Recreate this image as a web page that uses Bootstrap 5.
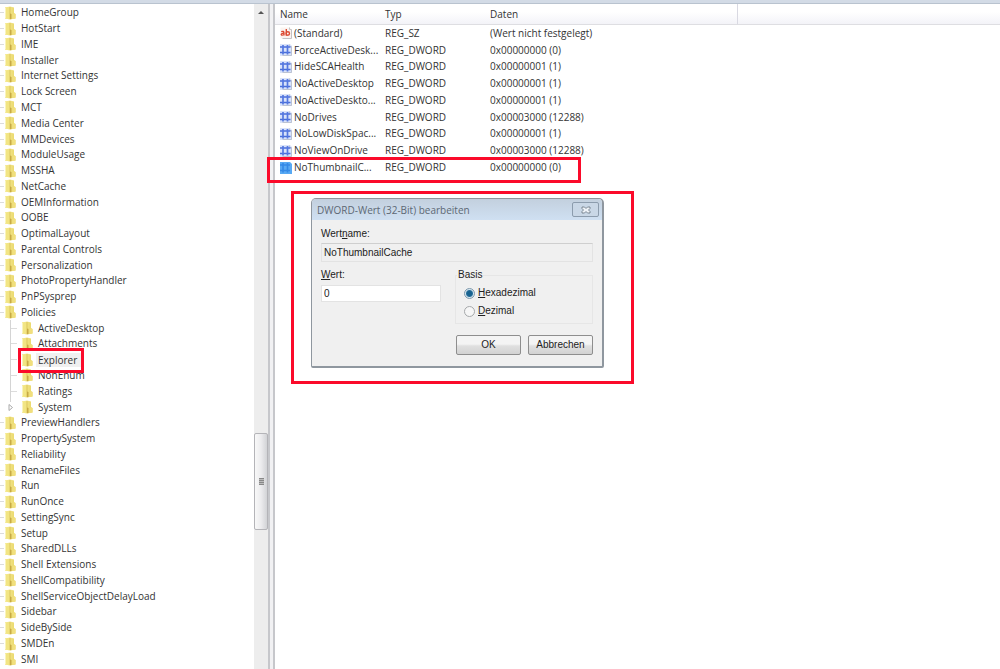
<!DOCTYPE html>
<html lang="de">
<head>
<meta charset="utf-8">
<meta name="viewport" content="width=device-width, initial-scale=1">
<title>Registrierungs-Editor</title>
<link href="https://cdn.jsdelivr.net/npm/bootstrap@5.3.0/dist/css/bootstrap.min.css" rel="stylesheet">
<script src="https://cdn.jsdelivr.net/npm/bootstrap@5.3.0/dist/js/bootstrap.bundle.min.js"></script>
<style>
body { font: 10px/15px "Open Sans", "Noto Sans", sans-serif; color: #333; background: #fff; }
.topline { height: 4px; background: #d3dbe6; border-bottom: 1px solid #b9c3cf; }
.tree-pane { width: 254px; min-height: 0; }
.tree { padding: 1px 0 2px; }
.tree-row { position: relative; flex: 1 1 0; min-height: 15px; gap: 5px; }
.tree-row::before { content: ""; width: 4px; margin-right: -5px; border-top: 1px solid #dcdcdc; }
.tree-row svg { width: 12px; height: 14px; }
.tree-child { padding-left: 10px; }
.tree-child::before { width: 7px; margin-right: -1px; }
.tree-child::after { content: ""; position: absolute; left: 10px; top: 0; bottom: 0; border-left: 1px solid #d4d4d4; }
.tree-last::after { bottom: 80%; }
.tree-last::before { border-color: transparent; }
.expander { position: absolute; left: 8px; top: 5px; width: 6px; height: 7px; padding: 0; border: 0; background: none; }
.expander .expander-mark { display: block; width: 6px; height: 7px; }
.picked { background: #f0f0f0; margin-left: -2px; padding: 0 4px 0 2px; line-height: 14px; }
.marker { position: absolute; border: 3px solid #fb0a2a; pointer-events: none; }
.marker-key { left: 18px; top: -4px; width: 66px; height: 25px; z-index: 2; }
.marker-value { left: -8px; top: -2px; width: 314px; height: 26px; z-index: 2; }
.scroller { width: 14px; background: #ededed; padding-top: 7px; }
.scroll-arrow { width: 0; border: 3px solid transparent; border-top: 0; border-bottom: 3px solid #555; }
.thumb { position: absolute; left: 0; right: 0; top: 64.5%; height: 97px; border: 1px solid #b4b4b8; border-radius: 2px; background: linear-gradient(90deg, #f8f8f8, #ececee 50%, #d2d3d6); }
.grip { width: 5px; height: 7px; background: repeating-linear-gradient(#888 0 1px, #bbb 1px 2px); }
.splitter { width: 7px; border: solid #c6c7cb; border-width: 0 2px; background: #f1f1f3; }
.values { height: 172px; width: 100%; table-layout: fixed; border-collapse: separate; border-spacing: 0; line-height: 15px; }
.values th { height: 21px; font-weight: 400; padding: 1px 0 0 5px; border-bottom: 1px solid #dedee2; background: linear-gradient(#fff 40%, #f3f3f8); }
.values th:last-child { border-left: 1px solid #d9d9e2; }
.values td { position: relative; padding: 0 0 0 5px; white-space: nowrap; }
.values svg { width: 12px; height: 12px; margin-right: 2px; display: block; }
.col-name { width: 105px; } .col-type { width: 105px; } .col-data { width: 252px; }
.stage { left: 16px; top: 187px; width: 343px; height: 193px; border: 3px solid #fb0a2a; padding: 4px 17px; }
.reg-dialog { width: 293px; height: 170px; border: 1px solid #8f979f; border-right-width: 2px; border-bottom-width: 2px; border-radius: 5px 5px 2px 2px; background: #f0f0f0; font-family: "Liberation Sans", Arial, sans-serif; line-height: 12px; color: #222; }
.reg-title { height: 21px; padding: 0 3px 0 5px; border-radius: 4px 4px 0 0; background: linear-gradient(#c3d0de, #cfe0f2); font-family: "Open Sans", sans-serif; color: #5d6874; }
.reg-close { width: 27px; height: 15px; padding: 0; border: 1px solid #8c9cad; border-radius: 2px; background: #c9d7e6; display: flex; align-items: center; justify-content: center; }
.reg-close svg { width: 10px; height: 8px; }
.reg-body { padding: 8px 9px 0; }
.reg-input { display: block; width: 100%; border: 1px solid #e3e3e3; border-radius: 0; font: inherit; color: #222; outline: 0; padding: 0 2px; }
.name-input { height: 19px; border-top-color: #cfcfcf; background: #f0f0f0; margin: 3px 0 7px; }
.value-input { height: 17px; background: #fff; margin-top: 4px; }
.value-col { width: 120px; }
.base { width: 138px; height: 49px; margin-top: 6px; border: 1px solid #e6e6e6; padding: 0 0 0 8px; position: relative; }
.base legend { position: absolute; left: 1px; top: -7px; width: auto; margin: 0; padding: 0 1px; background: #f0f0f0; font-size: 10px; line-height: 12px; float: none; }
.base label { gap: 3px; height: 18px; }
.base input { appearance: none; width: 11px; height: 11px; margin: 0; border: 1px solid #a5a8aa; border-radius: 50%; background: #f6f6f6; }
.base input:checked { border-color: #7d98ac; background: radial-gradient(circle, #17628f 0 2px, #276f9c 3px, #d7e7ef 4px); }
.reg-actions { gap: 7px; margin-top: 11px; }
.reg-btn { width: 65px; height: 20px; padding: 0; border: 1px solid #8e8e8e; border-radius: 2px; background: linear-gradient(#f4f4f4 45%, #e0e0e0 55%, #d2d2d2); color: #222; font-size: 10px; line-height: 12px; }
</style>
</head>
<body class="d-flex flex-column min-vh-100">
<svg class="position-absolute" width="0" height="0" aria-hidden="true">
  <defs>
    <linearGradient id="gold" x1="0" x2="1" y1="0" y2="0"><stop offset="0" stop-color="#f8efa0"/><stop offset="1" stop-color="#e9d667"/></linearGradient>
  </defs>
  <symbol id="folder" viewBox="0 0 12 14"><path d="M1 1.500 6 .500 10 1.500V7l1.500 1v4.500L6 13.500 1 12.500z" fill="url(#gold)"/><path d="M1 1.500 5.500 1v12.300L1 12.500z" fill="#f2e584"/><path d="M1.500 2v10" stroke="#faf4bc"/><path d="M6 1v12" stroke="#dcc55a"/><path d="M6 7.500 7.500 8v5l-1.500.300z" fill="#c8aa45"/><path d="M8.500 7.500 11.500 8v4.500l-3 .600z" fill="#f1df7d"/></symbol>
  <symbol id="dword" viewBox="0 0 12 12"><path d="M0 0h10l2 2v10H0z" fill="#d9e3fa"/><path d="M9.500.5v2h2v9h-9" fill="none" stroke="#bcc3d2"/><path d="M0 3h10.500M0 8.500h10.500" stroke="#4a6edb" stroke-width="1.700"/><path d="M3 1v9.500M7.500 1v9.500" stroke="#5477df" stroke-width="1.700"/></symbol>
  <symbol id="dword-on" viewBox="0 0 12 12"><path d="M0 0h10l2 2v10H0z" fill="#58a9f3"/><path d="M0 3h10M0 8.500h10M3 1v9.500M7.500 1v9.500" stroke="#3489e6" stroke-width="1.600"/></symbol>
</svg>
<div class="topline"></div>
<main class="d-flex flex-grow-1">
  <nav class="tree-pane d-flex flex-column flex-shrink-0" aria-label="Schlüssel">
    <ul class="tree list-unstyled d-flex flex-column flex-grow-1 mb-0" id="tree"></ul>
  </nav>
  <div class="scroller position-relative flex-shrink-0">
    <div class="scroll-arrow mx-auto"></div>
    <div class="thumb d-flex align-items-center justify-content-center"><span class="grip"></span></div>
  </div>
  <div class="splitter flex-shrink-0"></div>
  <section class="position-relative flex-grow-1">
    <table class="values">
      <colgroup><col class="col-name"><col class="col-type"><col class="col-data"><col></colgroup>
      <thead><tr><th>Name</th><th>Typ</th><th>Daten</th><th></th></tr></thead>
      <tbody id="values"></tbody>
    </table>
    <div class="stage position-absolute">
      <form class="reg-dialog" role="dialog" aria-labelledby="dlg-title" onsubmit="return false">
        <div class="reg-title d-flex align-items-center justify-content-between">
          <span id="dlg-title">DWORD-Wert (32-Bit) bearbeiten</span>
          <button type="button" class="reg-close" aria-label="Schließen"><svg viewBox="0 0 10 8"><path d="M1 1h2.500L5 2.500 6.500 1H9v1.500L7.500 4 9 5.500V7H6.500L5 5.500 3.500 7H1V5.500L2.500 4 1 2.500z" fill="#eef3f8" stroke="#66727f" stroke-width=".8"/></svg></button>
        </div>
        <div class="reg-body">
          <label class="d-block" for="vname">Wert<u>n</u>ame:</label>
          <input class="reg-input name-input" id="vname" value="NoThumbnailCache" readonly>
          <div class="d-flex justify-content-between">
            <div class="value-col">
              <label class="d-block" for="vdata"><u>W</u>ert:</label>
              <input class="reg-input value-input" id="vdata" value="0">
            </div>
            <fieldset class="base">
              <legend>Basis</legend>
              <div class="pt-2">
                <label class="d-flex align-items-center" for="hex"><input type="radio" name="base" id="hex" checked><span><u>H</u>exadezimal</span></label>
                <label class="d-flex align-items-center" for="dec"><input type="radio" name="base" id="dec"><span><u>D</u>ezimal</span></label>
              </div>
            </fieldset>
          </div>
          <div class="reg-actions d-flex justify-content-end">
            <button type="submit" class="reg-btn">OK</button>
            <button type="button" class="reg-btn">Abbrechen</button>
          </div>
        </div>
      </form>
    </div>
  </section>
</main>
<script>
const before = ["HomeGroup","HotStart","IME","Installer","Internet Settings","Lock Screen","MCT","Media Center","MMDevices","ModuleUsage","MSSHA","NetCache","OEMInformation","OOBE","OptimalLayout","Parental Controls","Personalization","PhotoPropertyHandler","PnPSysprep","Policies"];
const children = ["ActiveDesktop","Attachments","Explorer","NonEnum","Ratings","System"];
const after = ["PreviewHandlers","PropertySystem","Reliability","RenameFiles","Run","RunOnce","SettingSync","Setup","SharedDLLs","Shell Extensions","ShellCompatibility","ShellServiceObjectDelayLoad","Sidebar","SideBySide","SMDEn","SMI"];
const folder = '<svg class="flex-shrink-0" aria-hidden="true"><use href="#folder"/></svg>';
const row = (name, cls, extra, label) => `<li class="tree-row d-flex align-items-center ${cls}">${folder}<span class="${label}">${name}</span>${extra}</li>`;
document.getElementById("tree").innerHTML =
  before.map(n => row(n, "", "", "")).join("") +
  children.map(n => row(n, n === "System" ? "tree-child tree-last" : "tree-child",
    n === "Explorer" ? '<span class="marker marker-key"></span>' :
    n === "System" ? '<button type="button" class="expander" aria-label="Erweitern"><svg class="expander-mark" viewBox="0 0 6 7"><path d="M1 .5 4.500 3.500 1 6.500z" fill="#fff" stroke="#aaa"/></svg></button>' : "",
    n === "Explorer" ? "picked" : "")).join("") +
  after.map(n => row(n, "", "", "")).join("");

const data = [
  ["(Standard)","REG_SZ","(Wert nicht festgelegt)"],
  ["ForceActiveDesk...","REG_DWORD","0x00000000 (0)"],
  ["HideSCAHealth","REG_DWORD","0x00000001 (1)"],
  ["NoActiveDesktop","REG_DWORD","0x00000001 (1)"],
  ["NoActiveDeskto...","REG_DWORD","0x00000001 (1)"],
  ["NoDrives","REG_DWORD","0x00003000 (12288)"],
  ["NoLowDiskSpac...","REG_DWORD","0x00000001 (1)"],
  ["NoViewOnDrive","REG_DWORD","0x00003000 (12288)"],
  ["NoThumbnailC...","REG_DWORD","0x00000000 (0)"]
];
const szIcon = '<svg viewBox="0 0 12 12" aria-hidden="true"><path d="M.5.5h9l2 2v9H.5z" fill="#fbf3f0"/><path d="M9.500.5v2h2v9h-9" fill="none" stroke="#c4c2c4"/><path d="M1.200 4.700Q4 3.500 4 6v2.500M4 6.300Q1.200 6 1.200 7.600 2 8.800 4 7.500" fill="none" stroke="#dc4a32" stroke-width="1.300"/><path d="M6.300 2v6.800" stroke="#dc4a32" stroke-width="1.400"/><circle cx="7.800" cy="6.500" r="1.700" fill="none" stroke="#dc4a32" stroke-width="1.400"/></svg>';
document.getElementById("values").innerHTML = data.map(([n, t, d], i) => {
  const last = i === data.length - 1;
  const icon = i === 0 ? szIcon : `<svg aria-hidden="true"><use href="#${last ? "dword-on" : "dword"}"/></svg>`;
  return `<tr><td><div class="d-flex align-items-center">${icon}<span>${n}</span></div>${last ? '<span class="marker marker-value"></span>' : ""}</td><td>${t}</td><td>${d}</td><td></td></tr>`;
}).join("");
</script>
</body>
</html>
